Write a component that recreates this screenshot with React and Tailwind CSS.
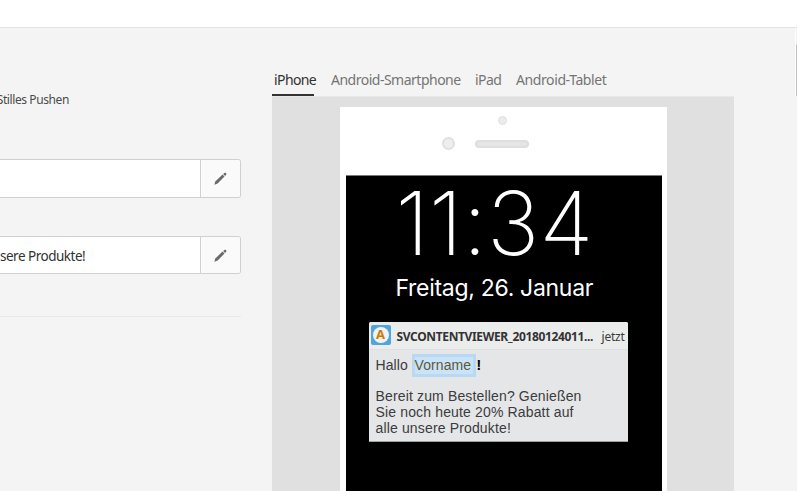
function Pencil() {
  return (
    <svg className="-ml-px h-[13px] w-[13px]" viewBox="0 0 14 14" fill="#6a6a6a">
      <path d="M.4 13.6 L1.4 10.2 L9.2 2.8 L11.3 4.9 L3.9 12.4 Z" />
      <path d="M9.9 2.2 L11.1 1 Q12 .4 12.9 1.2 Q13.7 2.1 13.1 3 L11.9 4.3 Z" />
    </svg>
  );
}

function Field({ children, className }) {
  return (
    <div className={`flex w-[241px] overflow-hidden rounded-r-[3px] border border-l-0 border-[#d0d0d0] bg-white ${className}`}>
      <div className="flex w-[200px] items-center pt-[2px] text-[13.5px] tracking-[-0.5px] whitespace-nowrap text-[#323232]">
        {children}
      </div>
      <div className="flex flex-1 items-center justify-center border-l border-[#d0d0d0] bg-[#fafafa]">
        <Pencil />
      </div>
    </div>
  );
}

function Tabs() {
  return (
    <nav className="flex h-[29px] text-[14px] leading-[26px] whitespace-nowrap text-[#747474]">
      <div className="mr-[17px] w-[42px] border-b-2 border-[#323232] pl-[2px] tracking-[-0.6px] text-[#323232]">iPhone</div>
      <div className="w-[144px] tracking-[-0.5px]">Android-Smartphone</div>
      <div className="w-[41px] tracking-[-0.6px]">iPad</div>
      <div className="tracking-[-0.4px]">Android-Tablet</div>
    </nav>
  );
}

function Notification() {
  return (
    <div className="mt-[22px] ml-[23px] h-[120px] w-[259px] rounded-t-[2px] border-b border-[#9da39f] bg-[#e5e6e8]">
      <div className="flex h-[28px] items-center rounded-t-[2px] border-b border-[#dfe0e1] bg-[#ebecec] pl-[2px]">
        <div className="-mt-[2px] flex h-[20px] w-[20px] items-center justify-center rounded-[2px] bg-[#4ea6dc]">
          <div className="flex h-[16px] w-[16px] items-center justify-center rounded-full bg-[#f2f2f0] text-[13px] leading-none font-bold text-[#cf7a0c]">A</div>
        </div>
        <div className="ml-[6px] w-[205px] pt-[3px] text-[12px] font-bold tracking-[-0.36px] whitespace-nowrap text-[#323232]">
          SVCONTENTVIEWER_20180124011...
        </div>
        <div className="pt-[3px] text-[12px] tracking-[-0.2px] text-[#3c3c3c]">jetzt</div>
      </div>
      <div className="pl-[7px] font-['Liberation_Sans',Arial,sans-serif] text-[14px] leading-[16px] text-[#3c3c3c]">
        <div className="flex h-[30px] items-center whitespace-nowrap tracking-[0.1px]">
          <span className="w-[36px]">Hallo</span>
          <span className="w-[64px] border-[3px] border-[#b9d8f2] bg-[#cae3f9] pr-[2px] pb-px text-[#5c5a34]">Vorname</span>
          <span className="ml-[1px] font-bold text-black">!</span>
        </div>
        <div className="mt-[8px] whitespace-nowrap tracking-[0.15px]">
          Bereit zum Bestellen? Genießen<br />
          Sie noch heute 20% Rabatt auf<br />
          alle unsere Produkte!
        </div>
      </div>
    </div>
  );
}

function Phone() {
  return (
    <div className="mx-auto mt-[10px] flex h-[385px] w-[327px] flex-col bg-white pl-[6px]">
      <div className="h-[68px]">
        <div className="ml-[152px] pt-[9px]">
          <div className="h-[9px] w-[9px] rounded-full border border-[#dfdfdf] bg-[#ececec]" />
        </div>
        <div className="mt-[12px] ml-[96px] flex items-center">
          <div className="h-[13px] w-[13px] rounded-full border-2 border-[#e0e0e0] bg-[#eeeeee]" />
          <div className="ml-[20px] h-[8px] w-[54px] rounded-full border-2 border-[#dedede] bg-[#e5e5e5]" />
        </div>
      </div>
      <div className="h-[317px] w-[316px] border-t border-[#777] bg-black font-['Inter',sans-serif] text-white">
        <div className="h-[92px] pl-[50px] text-[88px] leading-[94px] font-extralight tracking-[0.1px] whitespace-nowrap">11:34</div>
        <div className="h-[32px] pl-[50px] text-[23px] leading-[40px] tracking-[-0.3px] whitespace-nowrap">Freitag, 26. Januar</div>
        <div className="font-['Noto_Sans',sans-serif]">
          <Notification />
        </div>
      </div>
    </div>
  );
}

export default function App() {
  return (
    <div className="flex h-[491px] w-[797px] flex-col overflow-hidden bg-[#f4f4f4] font-['Noto_Sans',sans-serif]">
      <header className="h-[28px] shrink-0 border-b border-[#e2e2e2] bg-white" />
      <main className="flex flex-1">
        <section className="w-[241px]">
          <div className="flex h-[131px] w-[69px] justify-end pt-[63px] text-[12px] leading-[18px] tracking-[-0.4px] whitespace-nowrap text-[#4b4b4b]">
            Stilles Pushen
          </div>
          <Field className="h-[39px]" />
          <Field className="mt-[38px] h-[38px]">sere Produkte!</Field>
          <div className="mt-[42px] border-t border-[#e9e9e9]" />
        </section>
        <section className="ml-[31px] w-[462px] pt-[39px]">
          <Tabs />
          <div className="flex h-[395px] items-start border-t border-[#e8e8e8] bg-[#e0e0e0]">
            <Phone />
          </div>
        </section>
        <div className="ml-auto w-[2px]">
          <div className="h-[17px] border-l border-white bg-[#f0f0f0]" />
          <div className="h-[51px] border-l border-white bg-[#c1c1c1]" />
        </div>
      </main>
    </div>
  );
}
